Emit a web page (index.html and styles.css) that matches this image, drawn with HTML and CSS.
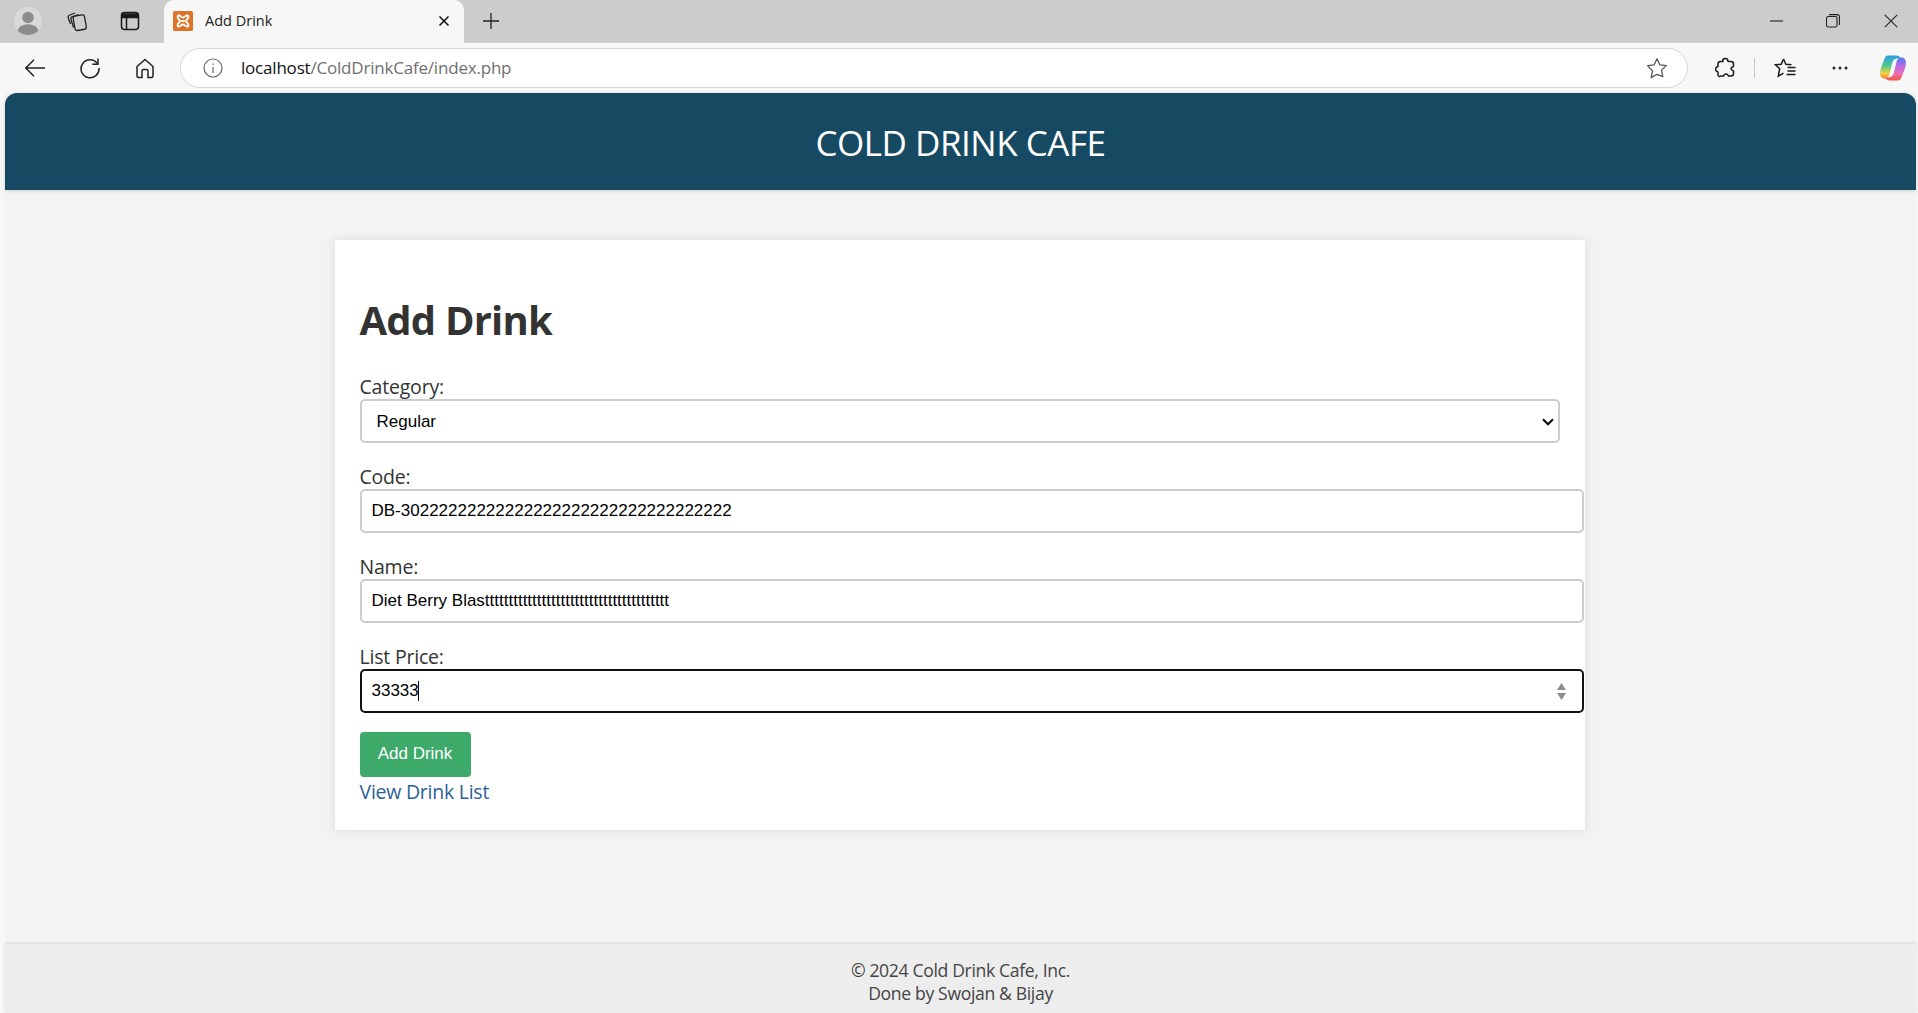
FILE: index.html
```html
<!DOCTYPE html>
<html lang="en">
<head>
<meta charset="utf-8">
<title>Add Drink</title>
<link rel="stylesheet" href="styles.css">
</head>
<body>
<div class="window">
  <div class="tabstrip">
    <span class="strip-btn profile">
      <svg width="28" height="28" viewBox="0 0 28 28"><defs><clipPath id="pc"><circle cx="14" cy="14" r="14"/></clipPath></defs><circle cx="14" cy="14" r="14" fill="#d9d9d9"/><g clip-path="url(#pc)"><circle cx="14" cy="10.500" r="5.800" fill="#8c8c8c"/><ellipse cx="14" cy="24" rx="10.500" ry="6.800" fill="#8c8c8c"/></g></svg>
    </span>
    <span class="strip-btn collections">
      <svg width="22" height="22" viewBox="0 0 22 22" fill="none" stroke="#222" stroke-width="1.300"><rect x="8" y="5.500" width="11.500" height="14.500" rx="2.200" transform="rotate(-10 13.700 12.700)"/><path d="M7.500 17.500 5 9.500c-.4-1.400.3-2.500 1.600-2.900L12.500 4.500"/><path d="M4.500 14 2.300 8c-.5-1.400.2-2.600 1.500-3L9 3"/></svg>
    </span>
    <span class="strip-btn vtabs">
      <svg width="20" height="20" viewBox="0 0 20 20" fill="none" stroke="#1a1a1a" stroke-width="1.500"><rect x="1.500" y="1.500" width="17" height="17" rx="3"/><path d="M2 3h16v3.500H2z" fill="#1a1a1a"/><path d="M6.500 6v12"/></svg>
    </span>
    <div class="tab">
      <svg class="favicon" width="20" height="20" viewBox="0 0 20 20"><rect width="20" height="20" rx="1.500" fill="#de742a"/><path d="M5.500 4.500c1.500 0 2 .3 2.500 1 .5.600 1 1 2 1s1.500-.4 2-1c.5-.7 1-1 2.500-1 .8 0 1 .4 1 1 0 1.500-.5 2-1.200 2.500-.6.500-1 1-1 2s.4 1.500 1 2c.7.500 1.200 1 1.200 2.500 0 .6-.2 1-1 1-1.500 0-2-.3-2.500-1-.5-.6-1-1-2-1s-1.500.4-2 1c-.5.700-1 1-2.500 1-.8 0-1-.4-1-1 0-1.500.5-2 1.200-2.500.6-.5 1-1 1-2s-.4-1.500-1-2C5 7.500 4.500 7 4.500 5.500c0-.6.200-1 1-1z" fill="none" stroke="#fff" stroke-width="1.800"/><path d="M7.500 10h5" stroke="#fff" stroke-width="1.800"/></svg>
      <span class="tab-title">Add Drink</span>
      <svg class="tab-close" width="12" height="12" viewBox="0 0 12 12" stroke="#111" stroke-width="1.500"><path d="M1.500 1.500l9 9M10.500 1.500l-9 9"/></svg>
    </div>
    <svg class="new-tab" width="18" height="18" viewBox="0 0 18 18" stroke="#222" stroke-width="1.300"><path d="M9 1v16M1 9h16"/></svg>
    <div class="win-controls">
      <svg class="win-min" width="14" height="14" viewBox="0 0 14 14" stroke="#222" stroke-width="1.100"><path d="M0 7h13"/></svg>
      <svg class="win-max" width="14" height="14" viewBox="0 0 14 14" fill="none" stroke="#222" stroke-width="1.100"><rect x=".5" y="2.500" width="10.500" height="10.500" rx="1.800"/><path d="M3 .6h8.200c1.300 0 2.200.9 2.200 2.200V11"/></svg>
      <svg class="win-close" width="14" height="14" viewBox="0 0 14 14" stroke="#222" stroke-width="1.100"><path d="M.8.800l12.400 12.400M13.200.8.800 13.200"/></svg>
    </div>
  </div>
  <div class="toolbar">
    <svg class="nav-back" width="22" height="20" viewBox="0 0 22 20" fill="none" stroke="#222" stroke-width="1.500"><path d="M21 10H2M10 1.800 1.800 10l8.200 8.200"/></svg>
    <svg class="nav-reload" width="22" height="22" viewBox="0 0 22 22" fill="none" stroke="#222" stroke-width="1.500"><path d="M18.300 6.500A9 9 0 1 0 20 11"/><path d="M19 1.500v5.700h-5.700"/></svg>
    <svg class="nav-home" width="20" height="21" viewBox="0 0 20 21" fill="none" stroke="#222" stroke-width="1.500"><path d="M2 8.500 10 1.500l8 7V18a1.500 1.500 0 0 1-1.500 1.500h-3.500V13a1.500 1.500 0 0 0-1.500-1.500h-3A1.500 1.500 0 0 0 7 13v6.500H3.500A1.500 1.500 0 0 1 2 18z"/></svg>
    <div class="address">
      <svg class="info" width="20" height="20" viewBox="0 0 20 20" fill="none" stroke="#666" stroke-width="1.200"><circle cx="10" cy="10" r="9"/><path d="M10 9v6M10 5.500v1.500"/></svg>
      <span class="url"><span class="host">localhost</span>/ColdDrinkCafe/index.php</span>
      <svg class="star" width="22" height="22" viewBox="0 0 22 22" fill="none" stroke="#555" stroke-width="1.300"><path d="M11 1.800l2.800 6 6.500.8-4.800 4.500 1.300 6.500L11 17.300l-5.800 3.300 1.300-6.500L1.700 8.600l6.500-.8z" stroke-linejoin="round"/></svg>
    </div>
    <svg class="ext" width="20" height="22" viewBox="0 0 20 22" fill="none" stroke="#1a1a1a" stroke-width="1.500"><path d="M8 2.500c1-1.500 3.500-1.500 4.500 0 .5.800.3 1.500.5 2h3c1.500 0 2.500 1 2.500 2.500v2.500c-.8.300-2.500.3-2.500 2s1.700 2 2.500 2.500v2.500c0 1.500-1 2.500-2.500 2.500h-2.500c-.5-.8-.7-2-2.500-2s-2 1.200-2.500 2H5.500C4 20 3 19 3 17.500V15c-1-.3-2.500-1-2.500-2.700S2 9.800 3 9.500V7c0-1.500 1-2.500 2.500-2.500H8c.2-.5-.3-1.200 0-2z" stroke-linejoin="round"/></svg>
    <span class="sep"></span>
    <svg class="fav" width="22" height="22" viewBox="0 0 22 22" fill="none" stroke="#1a1a1a" stroke-width="1.500"><path d="M9.500 2l2.300 5.200 5.700.6" stroke-linejoin="round"/><path d="M9.500 2 7.200 7.200l-5.700.6 4.200 3.900-1.400 7.500 5.200-3"/><path d="M13.500 10.500h8M13.500 14h8M12.500 17.500h9"/></svg>
    <svg class="dots" width="16" height="4" viewBox="0 0 16 4" fill="#222"><circle cx="2" cy="2" r="1.500"/><circle cx="8" cy="2" r="1.500"/><circle cx="14" cy="2" r="1.500"/></svg>
    <svg class="copilot" width="28" height="28" viewBox="0 0 28 28">
      <defs>
        <linearGradient id="cpA" x1="0" y1="0" x2="0" y2="1"><stop offset="0" stop-color="#2b9ce8"/><stop offset=".45" stop-color="#4fc98a"/><stop offset=".78" stop-color="#f7d23c"/><stop offset="1" stop-color="#f47b3a"/></linearGradient>
        <linearGradient id="cpB" x1="0" y1="0" x2="0" y2="1"><stop offset="0" stop-color="#4a7df0"/><stop offset=".35" stop-color="#b66be8"/><stop offset=".72" stop-color="#f06eb0"/><stop offset="1" stop-color="#f0583c"/></linearGradient>
      </defs>
      <path d="M9 1.500H17C19.500 1.500 21 2.500 22 4.500C18 3.800 14.500 5 13.500 8L10.500 20C10 23 8.500 24.500 6 24.500C3 24.500 1 22.500 1 19.500C1 16 3 11 4.800 6.500C6 3 7 1.500 9 1.500z" fill="url(#cpA)"/>
      <path d="M19 26.500H11C8.500 26.500 7 25.500 6 23.500C10 24.200 13.500 23 14.500 20L17.500 8C18 5 19.500 3.500 22 3.500C25 3.500 27 5.500 27 8.500C27 12 25 17 23.200 21.500C22 25 21 26.500 19 26.500z" fill="url(#cpB)"/>
    </svg>
  </div>
  <div class="page">
    <header class="site-header"><h1 class="site-title">COLD DRINK CAFE</h1></header>
    <main class="site-main">
      <section class="card">
        <h2 class="card-title">Add Drink</h2>
        <form class="drink-form">
          <label class="field-label" for="category">Category:</label>
          <div class="select-wrap">
            <select class="field field-select" id="category"><option>Regular</option></select>
            <svg class="chevron" width="12" height="8" viewBox="0 0 12 8" fill="none" stroke="#111" stroke-width="2.200"><path d="M1 1.200l5 5 5-5"/></svg>
          </div>
          <label class="field-label" for="code">Code:</label>
          <input class="field field-text" id="code" type="text" value="DB-30222222222222222222222222222222222">
          <label class="field-label" for="name">Name:</label>
          <input class="field field-text" id="name" type="text" value="Diet Berry Blasttttttttttttttttttttttttttttttttttttttt">
          <label class="field-label" for="price">List Price:</label>
          <div class="price-wrap">
            <input class="field field-text field-active" id="price" type="text" value="33333">
            <span class="caret"></span>
            <svg class="spinner" width="9" height="17" viewBox="0 0 9 17" fill="#8c8c8c"><path d="M4.500 0 9 7H0zM0 10h9l-4.500 7z"/></svg>
          </div>
          <button class="submit" type="button">Add Drink</button>
        </form>
        <a class="list-link" href="#">View Drink List</a>
      </section>
    </main>
    <footer class="site-footer">
      <p class="foot-line">© 2024 Cold Drink Cafe, Inc.</p>
      <p class="foot-line">Done by Swojan &amp; Bijay</p>
    </footer>
  </div>
</div>
</body>
</html>
```
FILE: styles.css
```css
* { box-sizing: border-box; }
html, body { margin: 0; height: 100%; overflow: hidden; }
body { font-family: "Open Sans", "Noto Sans", sans-serif; background: #f7f7f7; color: #333; }
.window { display: flex; flex-direction: column; height: 1013px; width: 1918px; }

.tabstrip { height: 43px; background: #cccccc; display: flex; align-items: center; flex: none; }
.strip-btn { display: flex; align-items: center; justify-content: center; position: relative; top: -1px; }
.profile { margin-left: 14px; width: 28px; height: 28px; }
.collections { margin-left: 24px; width: 22px; }
.vtabs { margin-left: 32px; width: 20px; }
.tab { margin-left: 24px; width: 300px; height: 43px; background: #f7f7f7; border-radius: 10px 10px 0 0; display: flex; align-items: center; padding: 0 0 2px 9px; }
.favicon { flex: none; }
.tab-title { margin-left: 12px; font-size: 14.5px; color: #222; flex: 1; }
.tab-close { margin-right: 14px; }
.new-tab { margin: 0 0 2px 18px; }
.win-controls { margin-left: auto; display: flex; padding: 0 20px 2px 0; }
.win-max { margin-left: 42px; }
.win-close { margin-left: 44px; }

.toolbar { height: 50px; background: #f7f7f7; display: flex; align-items: center; flex: none; }
.nav-back { margin-left: 24px; }
.nav-reload { margin-left: 33px; }
.nav-home { margin-left: 34px; }
.address { margin-left: 25px; width: 1508px; height: 40px; background: #fff; border: 1px solid #d6d6d6; border-radius: 20px; display: flex; align-items: center; padding-left: 22px; padding-right: 19px; }
.url { margin: 0 0 2px 18px; font-size: 17px; color: #6f6f6f; flex: 1; letter-spacing: -.2px; }
.host { color: #111; }
.ext { margin-left: 27px; }
.sep { margin-left: 19px; width: 1px; height: 20px; background: #c8c8c8; }
.fav { margin-left: 19px; }
.dots { margin-left: 36px; }
.copilot { margin-left: 31px; }

.page { flex: 1; margin: 0 2px 0 5px; background: #f3f3f3; display: flex; flex-direction: column; min-height: 0; }
.site-header { height: 97px; background: #164a62; border-radius: 12px 12px 0 0; display: flex; align-items: center; justify-content: center; box-shadow: 0 1px 4px rgba(0,0,0,.15); flex: none; padding-top: 2px; }
.site-title { margin: 0; font-size: 35px; font-weight: 400; color: #fff; letter-spacing: -.5px; }
.site-main { flex: 1; display: flex; justify-content: center; align-items: flex-start; padding-top: 50px; }
.card { width: 1250px; height: 590px; padding: 0 25px; background: #fff; box-shadow: 0 0 10px rgba(0,0,0,.1); position: relative; left: -1px; }
.card-title { margin: 0; padding-top: 52px; font-size: 40px; line-height: 56px; font-weight: 700; color: #333; letter-spacing: -.8px; }
.drink-form { display: block; margin-top: 25px; }
.field-label { display: block; padding-top: 2px; font-size: 19.5px; line-height: 24px; color: #333; letter-spacing: -.2px; }
.field { display: block; height: 44px; font-family: "Liberation Sans", Arial, sans-serif; font-size: 17px; color: #000; background: #fff; border: 2px solid #cccccc; border-radius: 5px; margin-bottom: 20px; }
.select-wrap { position: relative; width: 1200px; }
.field-select { width: 1200px; padding: 0 0 0 15px; appearance: none; }
.chevron { position: absolute; right: 6px; top: 19px; pointer-events: none; }
.field-text { width: 1224px; padding: 0 10px; outline: none; }
.field-active { border-color: #111; margin-bottom: 0; }
.price-wrap { position: relative; width: 1224px; height: 44px; margin-bottom: 19px; }
.caret { position: absolute; left: 58px; top: 12px; width: 1px; height: 20px; background: #000; }
.spinner { position: absolute; right: 18px; top: 14px; }
.submit { display: block; width: 111px; height: 45px; padding: 0 0 2px; background: #3daa6a; color: #fff; border: 0; border-radius: 4px; font-family: "Liberation Sans", Arial, sans-serif; font-size: 17px; }
.list-link { display: block; margin-top: 2px; font-size: 19.5px; line-height: 26px; color: #2c5f96; text-decoration: none; letter-spacing: -.25px; }

.site-footer { height: 69px; flex: none; background: #ededed; box-shadow: 0 -1px 3px rgba(0,0,0,.12); text-align: center; padding-top: 15px; }
.foot-line { margin: 0; font-size: 17.6px; line-height: 23px; color: #444; letter-spacing: -.35px; }
```
